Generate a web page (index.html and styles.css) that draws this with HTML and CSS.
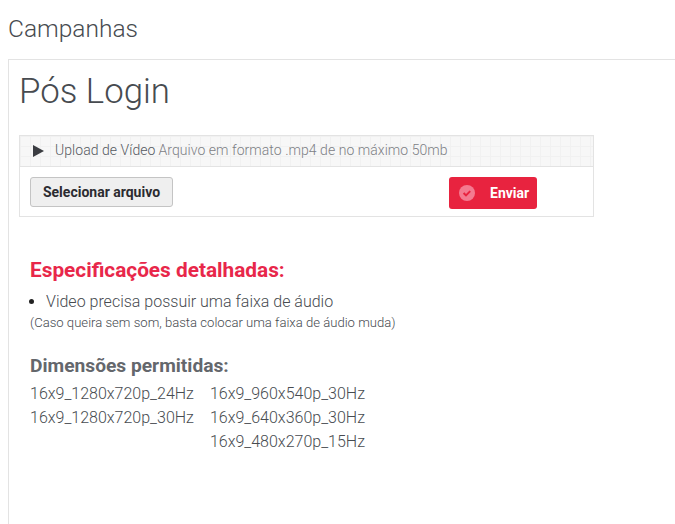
FILE: index.html
```html
<!DOCTYPE html>
<html lang="pt">
<head>
<meta charset="utf-8">
<title>Campanhas</title>
<link rel="stylesheet" href="styles.css">
</head>
<body>
<h1 class="page-title">Campanhas</h1>
<main class="panel">
  <h2 class="panel-title">Pós Login</h2>
  <section class="upload">
    <div class="upload-head">
      <span class="arrow"></span>
      <span class="upload-label">Upload de Vídeo</span>
      <span class="upload-hint">Arquivo em formato .mp4 de no máximo 50mb</span>
    </div>
    <div class="upload-body">
      <button class="file-btn" type="button">Selecionar arquivo</button>
      <button class="send-btn" type="button">
        <svg class="send-icon" width="16" height="16" viewBox="0 0 16 16"><circle cx="8" cy="8" r="8" fill="#f47a90"/><path d="M4.6 8l2.4 2.4 4.2-4.3" fill="none" stroke="#e8233f" stroke-width="2"/></svg>
        <span>Enviar</span>
      </button>
    </div>
  </section>
  <section class="specs">
    <h3 class="specs-title">Especificações detalhadas:</h3>
    <ul class="specs-list"><li>Video precisa possuir uma faixa de áudio</li></ul>
    <p class="specs-note">(Caso queira sem som, basta colocar uma faixa de áudio muda)</p>
    <h3 class="dims-title">Dimensões permitidas:</h3>
    <div class="dims">
      <div class="dims-col">
        <div>16x9_1280x720p_24Hz</div>
        <div>16x9_1280x720p_30Hz</div>
      </div>
      <div class="dims-col">
        <div>16x9_960x540p_30Hz</div>
        <div>16x9_640x360p_30Hz</div>
        <div>16x9_480x270p_15Hz</div>
      </div>
    </div>
  </section>
</main>
</body>
</html>
```

FILE: styles.css
```css
* { box-sizing: border-box; }
html, body { height: 100%; }
body {
  margin: 0;
  padding: 15px 0 0 8px;
  background: #fff;
  color: #474b50;
  font-family: Roboto, "Liberation Sans", sans-serif;
  font-weight: 300;
  overflow: hidden;
}
.page-title {
  margin: 0 0 16px;
  height: 28px;
  font-size: 24.5px;
  line-height: 28px;
  font-weight: 300;
}
.panel {
  height: 480px;
  border: 1px solid #e3e3e3;
  border-width: 1px 0 0 1px;
  padding: 11px 81px 0 10px;
}
.panel-title {
  margin: 0 0 24px;
  height: 40px;
  font-size: 34.8px;
  line-height: 40px;
  font-weight: 300;
}
.upload {
  width: 575px;
  border: 1px solid #e3e3e3;
}
.upload-head {
  display: flex;
  align-items: center;
  height: 30px;
  padding: 0 0 2px 13px;
  background-color: #f7f7f7;
  background-image:
    linear-gradient(#f1f1f1 1px, transparent 1px),
    linear-gradient(90deg, #f1f1f1 1px, transparent 1px);
  background-size: 10px 10px;
  font-size: 14px;
  letter-spacing: 0.05px;
}
.arrow {
  width: 0;
  height: 0;
  margin: 2px 11px 0 0;
  border-left: 11px solid #3b3d42;
  border-top: 6px solid transparent;
  border-bottom: 6px solid transparent;
}
.upload-label { margin-right: 3px; color: #55595f; }
.upload-hint { color: #7d8085; }
.upload-body {
  display: flex;
  align-items: flex-start;
  height: 50px;
  padding: 10px 0 0 10px;
  border-top: 1px solid #e3e3e3;
}
.file-btn {
  width: 143px;
  height: 30px;
  padding: 0;
  border: 1px solid #c4c4c4;
  border-radius: 3px;
  background: #efefef;
  color: #2b2b30;
  font: 700 14px Roboto, sans-serif;
}
.send-btn {
  display: flex;
  align-items: center;
  width: 88px;
  height: 32px;
  margin-left: 276px;
  padding: 0 0 0 10px;
  border: 0;
  border-radius: 3px;
  background: #e8233f;
  color: #fff;
  font: 700 14px Roboto, sans-serif;
}
.send-icon { margin-right: 15px; }
.specs { padding: 40px 0 0 11px; }
.specs-title {
  margin: 0;
  height: 26px;
  font-size: 20.8px;
  line-height: 26px;
  font-weight: 700;
  color: #e8274a;
}
.specs-list {
  margin: 8px 0 0;
  padding: 0 0 0 16px;
  font-size: 16px;
  line-height: 22px;
}
.specs-list li::marker { color: #222; }
.specs-note {
  margin: 1px 0 0;
  font-size: 13.1px;
  line-height: 18px;
  font-weight: 300;
}
.dims-title {
  margin: 21px 0 0;
  height: 26px;
  font-size: 19.2px;
  line-height: 26px;
  font-weight: 700;
  color: #64676c;
}
.dims {
  display: flex;
  gap: 16px;
  margin-top: 3px;
  font-size: 16px;
  line-height: 24px;
}
```
